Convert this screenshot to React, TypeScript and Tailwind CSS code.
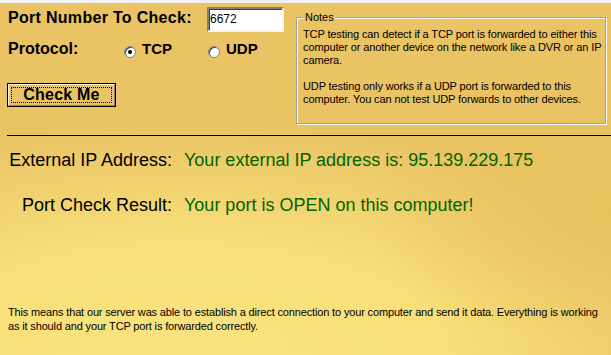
import React from 'react';

function Radio({ checked }: { checked?: boolean }) {
  return (
    <span className="w-[12px] h-[12px] rounded-full bg-white border border-[#808080] shadow-[inset_1px_1px_0_#404040] flex items-center justify-center shrink-0">
      {checked && <span className="w-[4px] h-[4px] rounded-full bg-black" />}
    </span>
  );
}

export default function App() {
  return (
    <div className="w-[611px] h-[355px] overflow-hidden text-black font-['Liberation_Sans',Arial,sans-serif] bg-[radial-gradient(ellipse_40%_38%_at_100%_60%,rgba(233,194,96,0.95),rgba(233,194,96,0)),radial-gradient(ellipse_110%_80%_at_30%_100%,#fae37f_0%,#f8df7a_40%,#e9c364_82%)] bg-[#e9c364]">
      <div className="h-[3px] bg-[#f0f0f0]" />

      {/* Top form + notes */}
      <div className="flex pl-[8px]">
        <div className="w-[288px] shrink-0">
          <div className="flex items-start pt-[4px]">
            <span className="w-[199px] mt-[1px] text-[16px] leading-[20px] font-bold tracking-[0.3px]">Port Number To Check:</span>
            <div className="w-[77px] h-[25px] bg-white border-2 border-t-[#808080] border-l-[#808080] border-r-[#f4f4f4] border-b-[#f4f4f4] shadow-[inset_1px_1px_0_#404040] pl-px text-[12px] leading-[20px]">
              6672
            </div>
          </div>

          <div className="flex items-start mt-[7px] h-[20px]">
            <span className="w-[116px] text-[16px] leading-[20px] font-bold">Protocol:</span>
            <label className="w-[84px] flex items-start gap-[6px]">
              <span className="mt-[7px]"><Radio checked /></span>
              <span className="text-[15px] leading-[20px] font-bold">TCP</span>
            </label>
            <label className="flex items-start gap-[6px]">
              <span className="mt-[7px]"><Radio /></span>
              <span className="text-[15px] leading-[20px] font-bold">UDP</span>
            </label>
          </div>

          <button className="mt-[24px] -ml-px w-[109px] h-[24px] border border-black bg-[#e9c364] p-0">
            <span className="flex w-full h-full border border-t-[#fff6dc] border-l-[#fff6dc] border-r-[#808080] border-b-[#808080] p-[2px]">
              <span className="flex-1 flex items-center justify-center border border-dotted border-black text-[16px] font-bold leading-none tracking-[0.2px]">
                Check Me
              </span>
            </span>
          </button>
        </div>

        <fieldset className="mt-[8px] w-[310px] h-[113px] border border-[#a0a0a0] shadow-[inset_1px_1px_0_#fff,1px_1px_0_#fff] text-[11px] leading-[13px] tracking-[-0.12px] pl-[6px] pr-px pt-[4px]">
          <legend className="ml-[1px] px-[1px] bg-[#e9c364] tracking-normal">Notes</legend>
          <p>TCP testing can detect if a TCP port is forwarded to either this computer or another device on the network like a DVR or an IP camera.</p>
          <p className="mt-[13px]">UDP testing only works if a UDP port is forwarded to this computer. You can not test UDP forwards to other devices.</p>
        </fieldset>
      </div>

      <div className="ml-[7px] mt-[11px] h-px bg-black" />

      {/* Results */}
      <div className="flex items-start mt-[13px] gap-[12px] text-[18px] leading-[22px]">
        <span className="w-[172px] text-right">External IP Address:</span>
        <span className="text-[#006400]">Your external IP address is: 95.139.229.175</span>
      </div>
      <div className="flex items-start mt-[23px] gap-[12px] text-[18px] leading-[22px]">
        <span className="w-[172px] text-right">Port Check Result:</span>
        <span className="text-[#006400]">Your port is OPEN on this computer!</span>
      </div>

      <p className="mt-[89px] pl-[8px] pr-[10px] text-[11px] leading-[14px] tracking-[-0.15px]">
        This means that our server was able to establish a direct connection to your computer and send it data. Everything is working as it should and your TCP port is forwarded correctly.
      </p>
    </div>
  );
}
